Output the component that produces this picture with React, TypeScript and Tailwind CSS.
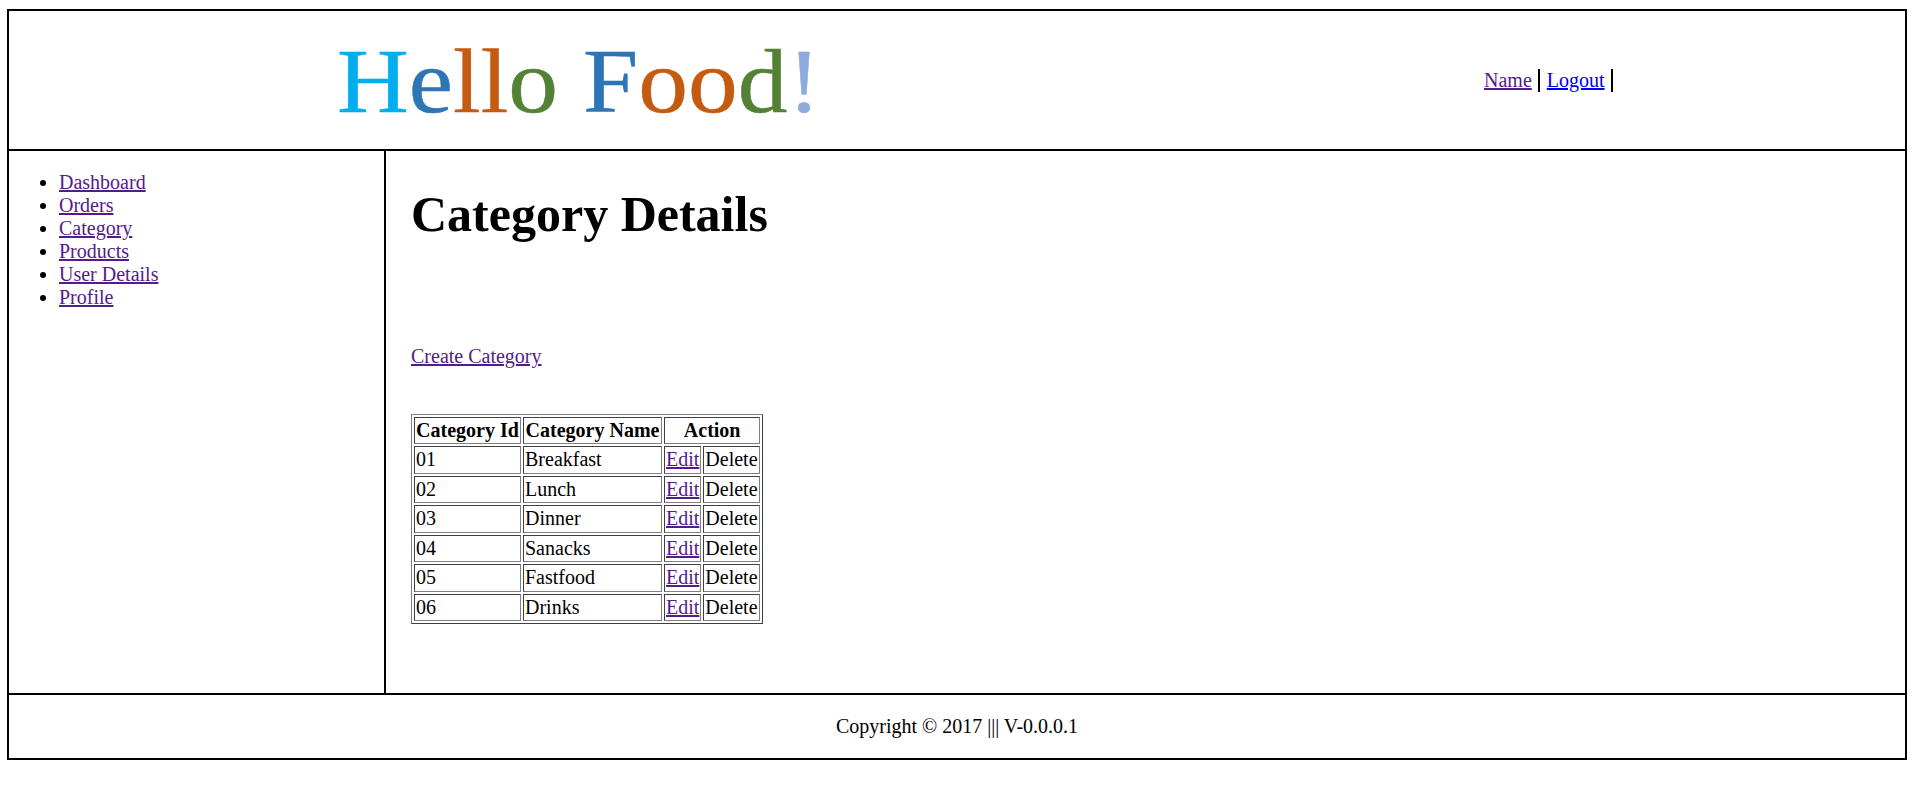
const linkV = "text-[#551a8b] underline";
const cell = "border border-solid border-t-[#404040] border-l-[#404040] border-r-[#808080] border-b-[#808080] p-px";
const rows: [string, string][] = [
  ["01", "Breakfast"],
  ["02", "Lunch"],
  ["03", "Dinner"],
  ["04", "Sanacks"],
  ["05", "Fastfood"],
  ["06", "Drinks"],
];
const nav = ["Dashboard", "Orders", "Category", "Products", "User Details", "Profile"];

export default function App() {
  return (
    <div className="bg-white text-black text-[20px] leading-[23px] pt-[9px] px-[7px] font-['Liberation_Serif',serif]">
      <div className="border-2 border-black">
        <header className="flex items-center h-[140px] border-b-2 border-black">
          <div className="w-[1475px] pl-[328px] pt-[2px] whitespace-nowrap">
            <div className="inline-block text-[99.5px] leading-[115px] scale-y-[0.92] [-webkit-text-stroke:0.5px_currentColor]">
              <span className="text-[#00aeef]">H</span>
              <span className="text-[#2e75b6]">e</span>
              <span className="text-[#c55a11]">ll</span>
              <span className="text-[#548235]">o</span>
              <span> </span>
              <span className="text-[#2e75b6]">F</span>
              <span className="text-[#c55a11]">oo</span>
              <span className="text-[#548235]">d</span>
              <span className="text-[#8faadc]">!</span>
            </div>
          </div>
          <div className="flex items-center">
            <a className={linkV} href="#">Name</a>
            <span className="w-0.5 h-[23px] bg-black ml-[6px] mr-[7px]" />
            <a className="text-[#0000ee] underline" href="#">Logout</a>
            <span className="w-0.5 h-[23px] bg-black ml-[6px]" />
          </div>
        </header>
        <div className="flex h-[542px]">
          <aside className="w-[377px] border-r-2 border-black pt-[20px] pl-[50px]">
            <ul className="list-disc">
              {nav.map((n) => (
                <li key={n}><a className={linkV} href="#">{n}</a></li>
              ))}
            </ul>
          </aside>
          <main className="flex-1 pl-[25px]">
            <h1 className="mt-[34px] text-[50px] leading-[58px] font-bold">Category Details</h1>
            <p className="mt-[102px]"><a className={linkV} href="#">Create Category</a></p>
            <table className="mt-[46px] border-separate border-spacing-[2px] border border-solid border-t-[#808080] border-l-[#808080] border-r-[#404040] border-b-[#404040]">
              <thead>
                <tr>
                  <th className={cell}>Category Id</th>
                  <th className={cell}>Category Name</th>
                  <th className={cell} colSpan={2}>Action</th>
                </tr>
              </thead>
              <tbody>
                {rows.map(([id, name]) => (
                  <tr key={id}>
                    <td className={cell + " h-[27.5px] w-[107px]"}>{id}</td>
                    <td className={cell + " w-[139px]"}>{name}</td>
                    <td className={cell + " w-[37px]"}><a className={linkV} href="#">Edit</a></td>
                    <td className={cell + " w-[57px]"}>Delete</td>
                  </tr>
                ))}
              </tbody>
            </table>
          </main>
        </div>
        <footer className="flex items-center justify-center h-[65px] border-t-2 border-black">
          Copyright © 2017 ||| V-0.0.0.1
        </footer>
      </div>
    </div>
  );
}
